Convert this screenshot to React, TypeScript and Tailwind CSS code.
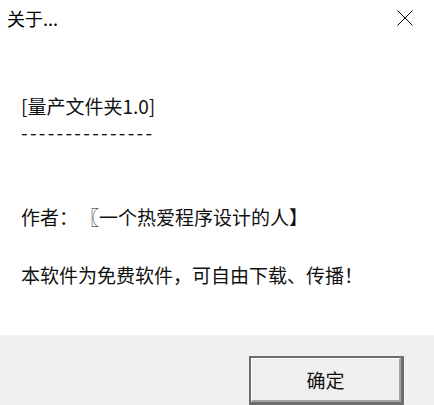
import React from "react";

const font = { fontFamily: '"Noto Sans CJK SC", "Noto Sans", sans-serif' };

export default function App() {
  return (
    <div
      className="w-[434px] h-[405px] flex flex-col bg-white text-black overflow-hidden"
      style={font}
    >
      <div className="h-[40px] flex items-start justify-between pl-[7px] pr-[21px] pt-[9px]">
        <span className="text-[18px] leading-[18px]">关于...</span>
        <svg width="16" height="16" viewBox="0 0 16 16" className="mt-[1px]">
          <path d="M0.5 0.5 L15.5 15.5 M15.5 0.5 L0.5 15.5" stroke="#000" strokeWidth="1" fill="none" />
        </svg>
      </div>
      <div className="flex-1 flex flex-col pl-[21px] pt-[56px] text-[19px] leading-[19px] text-[#111]">
        <div>[量产文件夹1.0]</div>
        <div className="mt-[7px] tracking-[2.3px]">---------------</div>
        <div className="mt-[66px] flex">
          <span>作者：</span>
          <span className="ml-[2px]">〖一个热爱程序设计的人】</span>
        </div>
        <div className="mt-[39px]">本软件为免费软件，可自由下载、传播！</div>
      </div>
      <div className="h-[70px] bg-[#f0f0f0] flex justify-end items-start pt-[21px] pr-[30px]">
        <div className="w-[155px] h-[49px] border-2 border-r-[3px] border-b-[3px] border-[#6e6e6e] flex">
          <div className="flex-1 border-t border-l border-white border-r-2 border-b-2 border-r-[#a3a3a3] border-b-[#a3a3a3] bg-[#efefef] flex items-center justify-center text-[19px] leading-[19px] text-[#111]">
            确定
          </div>
        </div>
      </div>
    </div>
  );
}
